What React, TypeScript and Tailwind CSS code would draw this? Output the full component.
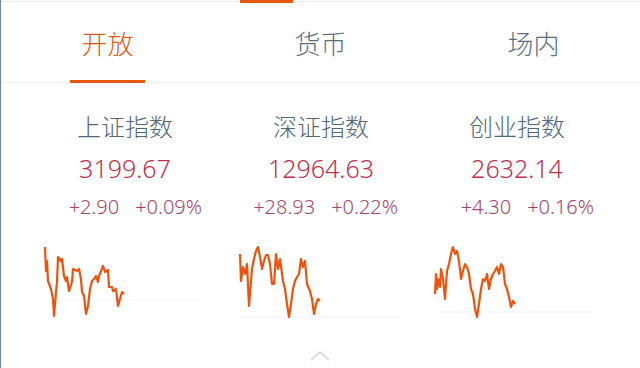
import React from "react";

const tabs = ["开放", "货币", "场内"];

const indices = [
    {
        name: "上证指数",
        value: "3199.67",
        change: "+2.90",
        pct: "+0.09%",
        base: { y: 61, x1: 15, x2: 160 },
        pts: "5,8 6,32 7,22 8,42 11,50 13,60 14,77 16,53 17,43 18,18 21,22 22,20 24,37 26,42 27,38 29,52 32,43 33,30 37,32 39,30 41,40 42,53 44,57 46,75 48,67 50,50 52,42 54,40 56,37 58,43 59,37 63,27 65,33 68,31 69,48 72,48 73,52 76,50 78,67 80,60 82,53 84,55",
    },
    {
        name: "深证指数",
        value: "12964.63",
        change: "+28.93",
        pct: "+0.22%",
        base: { y: 78, x1: 4, x2: 164 },
        pts: "4,15 5,42 7,28 9,35 11,25 13,67 16,30 18,20 20,12 22,8 24,18 26,30 28,22 30,16 32,16 34,25 36,45 38,45 40,15 42,30 44,20 47,42 49,50 51,65 53,78 55,65 57,50 59,42 61,38 63,35 65,20 67,28 69,22 71,45 74,52 76,60 78,75 80,65 82,60 84,62",
    },
    {
        name: "创业指数",
        value: "2632.14",
        change: "+4.30",
        pct: "+0.16%",
        base: { y: 73, x1: 8, x2: 160 },
        pts: "3,55 4,35 5,50 6,40 8,48 9,30 11,40 13,60 15,32 17,25 19,15 21,8 23,15 25,12 27,22 29,40 31,32 33,25 35,28 37,35 39,50 41,55 43,70 45,78 47,65 49,50 51,40 53,42 55,35 57,50 59,40 61,35 63,32 65,28 67,35 69,25 71,28 73,45 75,50 77,58 79,68 81,62 83,65",
    },
];

function Spark({ pts, base }: { pts: string; base: { y: number; x1: number; x2: number } }) {
    return (
        <svg width="165" height="80" viewBox="0 0 165 80" className="ml-[13px] block">
            <line x1={base.x1} y1={base.y} x2={base.x2} y2={base.y} stroke="#eef1f4" strokeWidth="1" />
            <polyline points={pts} fill="none" stroke="#f0520c" strokeWidth="2.2" strokeLinejoin="round" />
        </svg>
    );
}

export default function App() {
    return (
        <div
            className="w-[640px] h-[368px] bg-white border-l border-[#71869a] overflow-hidden font-light"
            style={{ fontFamily: '"Noto Sans", "Noto Sans CJK SC", sans-serif' }}
        >
            {/* top strip */}
            <div className="flex items-start h-[3px]">
                <div className="w-[239px] h-px mt-px bg-[#e9e9e9]" />
                <div className="w-[53px] h-[3px] bg-[#e8590c]" />
                <div className="flex-1 h-px mt-px bg-[#e9e9e9]" />
            </div>

            {/* tabs */}
            <div className="grid grid-cols-3 h-[80px] border-b border-[#f0f0f0]">
                {tabs.map((t, i) => (
                    <div key={t} className="flex flex-col items-center h-full">
                        <div
                            className={`pt-[25px] text-[26px] leading-[32px] ${i === 0 ? "text-[#e45a14]" : "text-[#5b6d7e]"}`}
                        >
                            {t}
                        </div>
                        {i === 0 && <div className="mt-auto mb-[-1px] w-[75px] h-[3px] bg-[#e4580f]" />}
                    </div>
                ))}
            </div>

            {/* indices */}
            <div className="grid grid-cols-3 pl-[26px] pr-[25px]">
                {indices.map((idx) => (
                    <div key={idx.name} className="flex flex-col">
                        <div className="pt-[28px] text-center text-[24px] leading-[32px] text-[#52677b]">{idx.name}</div>
                        <div className="mt-[9px] text-center text-[25px] leading-[32px] text-[#bf2f4e]">{idx.value}</div>
                        <div className="mt-[11px] flex justify-end gap-[16px] pr-[21px] text-[20px] leading-[24px] text-[#a2456b]">
                            <span>{idx.change}</span>
                            <span>{idx.pct}</span>
                        </div>
                        <div className="mt-[20px]">
                            <Spark pts={idx.pts} base={idx.base} />
                        </div>
                    </div>
                ))}
            </div>

            {/* expand arrow */}
            <div className="flex justify-center mt-[32px] pr-[1px]">
                <svg width="20" height="10" viewBox="0 0 20 10">
                    <polyline points="1,9 10,1 19,9" fill="none" stroke="#c9d5e0" strokeWidth="1.4" />
                </svg>
            </div>
        </div>
    );
}
